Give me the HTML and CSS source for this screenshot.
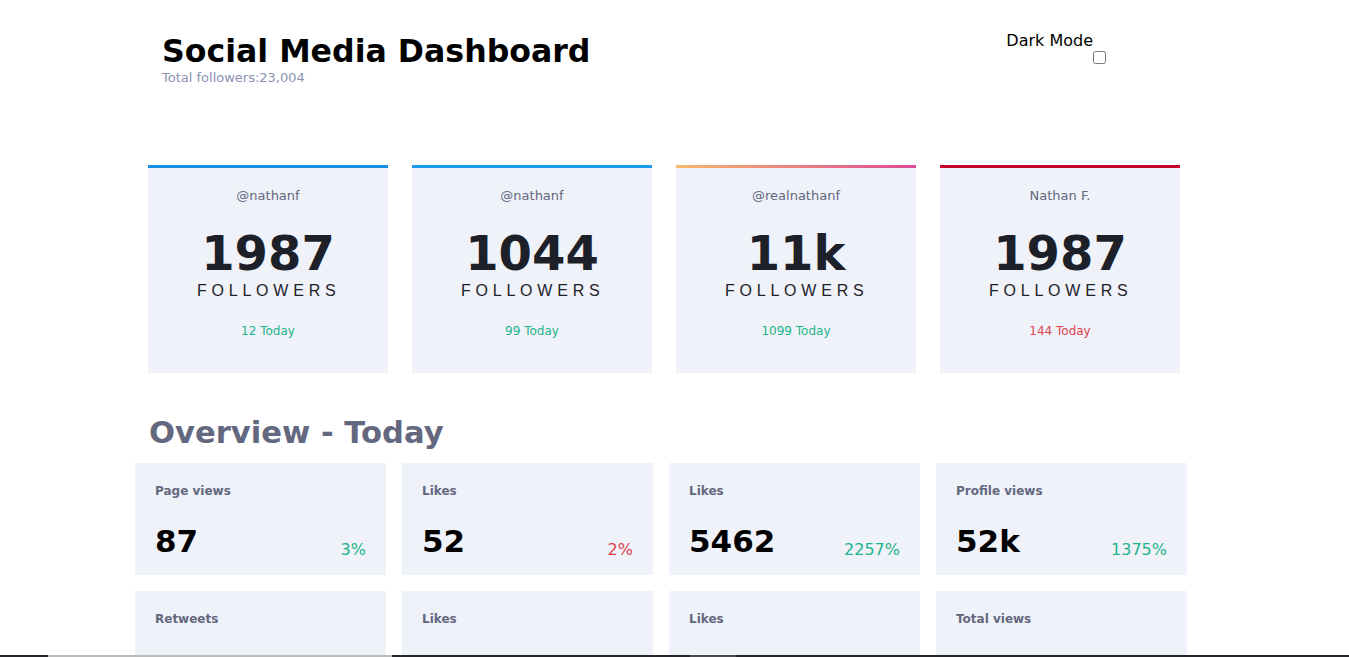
FILE: index.html
```html
<!DOCTYPE html>
<html lang="en">
<head>
<meta charset="utf-8">
<title>Social Media Dashboard</title>
<link rel="stylesheet" href="styles.css">
</head>
<body>
<header class="header">
  <div class="titles">
    <h1 class="title">Social Media Dashboard</h1>
    <p class="total">Total followers:23,004</p>
  </div>
  <label class="toggle">
    <span class="toggle-text">Dark Mode</span>
    <input type="checkbox" class="toggle-box">
  </label>
</header>

<section class="followers">
  <div class="fcard fb">
    <p class="handle">@nathanf</p>
    <p class="count">1987</p>
    <p class="unit">FOLLOWERS</p>
    <p class="today up">12 Today</p>
  </div>
  <div class="fcard tw">
    <p class="handle">@nathanf</p>
    <p class="count">1044</p>
    <p class="unit">FOLLOWERS</p>
    <p class="today up">99 Today</p>
  </div>
  <div class="fcard ig">
    <p class="handle">@realnathanf</p>
    <p class="count">11k</p>
    <p class="unit">FOLLOWERS</p>
    <p class="today up">1099 Today</p>
  </div>
  <div class="fcard yt">
    <p class="handle">Nathan F.</p>
    <p class="count">1987</p>
    <p class="unit">FOLLOWERS</p>
    <p class="today down">144 Today</p>
  </div>
</section>

<h2 class="overview-title">Overview - Today</h2>

<section class="overview">
  <div class="ocard">
    <p class="olabel">Page views</p>
    <div class="orow"><span class="onum">87</span><span class="opct up">3%</span></div>
  </div>
  <div class="ocard">
    <p class="olabel">Likes</p>
    <div class="orow"><span class="onum">52</span><span class="opct down">2%</span></div>
  </div>
  <div class="ocard">
    <p class="olabel">Likes</p>
    <div class="orow"><span class="onum">5462</span><span class="opct up">2257%</span></div>
  </div>
  <div class="ocard">
    <p class="olabel">Profile views</p>
    <div class="orow"><span class="onum">52k</span><span class="opct up">1375%</span></div>
  </div>
  <div class="ocard">
    <p class="olabel">Retweets</p>
    <div class="orow"><span class="onum">117</span><span class="opct up">303%</span></div>
  </div>
  <div class="ocard">
    <p class="olabel">Likes</p>
    <div class="orow"><span class="onum">507</span><span class="opct up">553%</span></div>
  </div>
  <div class="ocard">
    <p class="olabel">Likes</p>
    <div class="orow"><span class="onum">107</span><span class="opct down">19%</span></div>
  </div>
  <div class="ocard">
    <p class="olabel">Total views</p>
    <div class="orow"><span class="onum">1407</span><span class="opct down">12%</span></div>
  </div>
</section>

<div class="edge-bar">
  <span class="seg seg-dark seg-a"></span>
  <span class="seg seg-light seg-b"></span>
  <span class="seg seg-dark seg-c"></span>
  <span class="seg seg-mid seg-d"></span>
  <span class="seg seg-dark seg-e"></span>
</div>
</body>
</html>
```

FILE: styles.css
```css
* { box-sizing: border-box; }

html, body {
  margin: 0;
  padding: 0;
  background: #ffffff;
  font-family: "DejaVu Sans", Verdana, sans-serif;
  color: #000;
}

body { min-height: 900px; }

p { margin: 0; }

.header {
  display: flex;
  justify-content: space-between;
  align-items: flex-start;
  padding: 33px 0 0 162px;
  width: 1106px;
}

.title {
  margin: 0;
  font-size: 31.6px;
  line-height: 37px;
  font-weight: bold;
  color: #000;
}

.total {
  font-size: 13px;
  line-height: 15px;
  color: #8b92b3;
}

.toggle {
  display: grid;
  grid-template-columns: auto auto;
  margin-top: -2px;
  font-size: 16px;
  line-height: 19px;
  color: #000;
}

.toggle-text { grid-column: 1; grid-row: 1; }

.toggle-box {
  grid-column: 2;
  grid-row: 2;
  width: 13px;
  height: 13px;
  margin: 1px 0 0 0;
}

/* follower cards */
.followers {
  display: grid;
  grid-template-columns: repeat(4, 240px);
  gap: 24px;
  margin: 80px 0 0 148px;
}

.fcard {
  height: 208px;
  background: #f0f2fa;
  border-top: 3px solid #1d8fe0;
  text-align: center;
  padding-top: 20px;
}

.fcard.fb { border-top-color: #178fe0; }
.fcard.tw { border-top-color: #1d9be9; }
.fcard.ig {
  border-top: 0;
  padding-top: 23px;
  background:
    linear-gradient(90deg, #f6b86c, #dc4b96) top / 100% 3px no-repeat,
    #f0f2fa;
}
.fcard.yt { border-top-color: #c4042d; }

.handle {
  font-size: 13px;
  line-height: 16px;
  color: #63687e;
}

.count {
  margin-top: 21px;
  font-size: 48px;
  line-height: 56px;
  font-weight: bold;
  color: #1d1f29;
}

.unit {
  margin-top: 1px;
  font-family: "Liberation Sans", Arial, sans-serif;
  font-size: 16px;
  line-height: 18px;
  letter-spacing: 4.8px;
  padding-left: 1.5px;
  color: #1d1f29;
}

.today {
  margin-top: 24px;
  font-size: 12px;
  line-height: 15px;
}

.up { color: #1db489; }
.down { color: #dc414c; }

/* overview */
.overview-title {
  margin: 42px 0 0 149px;
  font-size: 30.6px;
  line-height: 35px;
  font-weight: bold;
  color: #63687e;
}

.overview {
  display: grid;
  grid-template-columns: repeat(4, 251px);
  gap: 16px;
  margin: 13px 0 0 135px;
}

.ocard {
  height: 112px;
  background: #f0f2fa;
  padding: 21px 20px 16px 20px;
}

.olabel {
  font-size: 12px;
  line-height: 15px;
  font-weight: bold;
  color: #63687e;
}

.orow {
  display: flex;
  justify-content: space-between;
  align-items: flex-end;
  margin-top: 25px;
}

.onum {
  font-size: 31px;
  line-height: 35px;
  font-weight: bold;
  color: #000;
}

.opct {
  font-size: 16px;
  line-height: 19px;
}

/* bottom screen edge */
.edge-bar {
  position: fixed;
  left: 0;
  right: 0;
  bottom: 0;
  height: 2px;
  display: flex;
}

.seg { display: block; height: 2px; }
.seg-dark { background: #26272b; }
.seg-light { background: #bcbcbc; }
.seg-mid { background: #4a4b50; }
.seg-a { width: 48px; }
.seg-b { width: 344px; }
.seg-c { width: 298px; }
.seg-d { width: 46px; }
.seg-e { flex: 1; }
```
